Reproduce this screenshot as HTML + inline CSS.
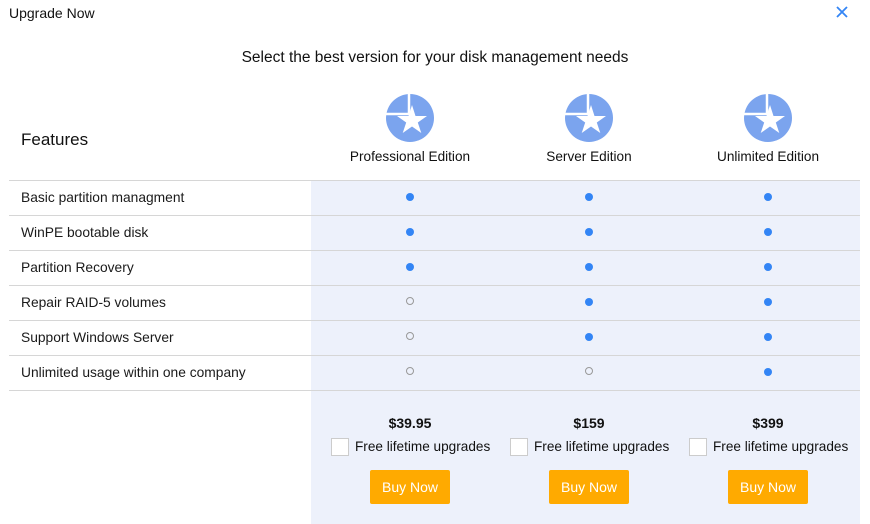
<!DOCTYPE html>
<html><head><meta charset="utf-8"><style>
body{margin:0;width:870px;height:524px;background:#fff;font-family:"Liberation Sans",sans-serif;color:#111;position:relative;overflow:hidden}
.a{position:absolute}
.bg{left:311px;top:180px;width:549px;height:344px;background:#edf1fb}
.hl{left:9px;width:851px;height:1px;background:#d6d6d6}
.lbl{left:21px;font-size:13.8px;color:#1a1a1a}
.dot{width:8px;height:8px;border-radius:50%;background:#3385f5}
.o{width:6px;height:6px;border-radius:50%;border:1px solid #999;background:transparent}
.ed{font-size:13.6px;text-align:center;width:160px}
.pr{font-size:14px;font-weight:bold;text-align:center;width:160px}
.cb{width:16px;height:16px;border:1px solid #ccc;background:#fff}
.fl{font-size:13.6px}
.bn{width:80px;height:34px;background:#ffaa00;color:#fff;font-size:14px;text-align:center;line-height:34px;border-radius:2px}
</style></head><body>
<div class="a bg"></div>
<div class="a" style="left:9px;top:5px;font-size:14px">Upgrade Now</div>
<svg class="a" style="left:836px;top:6px" width="12" height="12"><path d="M1,1 L11,11 M11,1 L1,11" stroke="#3385f5" stroke-width="1.8"/></svg>
<div class="a" style="left:0;width:870px;top:49px;text-align:center;font-size:15.5px">Select the best version for your disk management needs</div>
<div class="a" style="left:21px;top:130px;font-size:17px">Features</div>

<svg class="a" style="left:0;top:0" width="870" height="180">
<defs><g id="ic">
<circle cx="0" cy="0" r="24" fill="#7ba4ee"/>
<path d="M-1,-26 L-1,-4 L-26,-4" stroke="#fff" stroke-width="2.5" fill="none"/>
<polygon fill="#fff" points="2,-13 5.5,-2 17,-2 7.8,4.5 11.3,15 2,8.5 -7.3,15 -3.8,4.5 -13,-2 -1.5,-2"/>
</g></defs>
<use href="#ic" x="410" y="118"/>
<use href="#ic" x="589" y="118"/>
<use href="#ic" x="768" y="118"/>
</svg>
<div class="a ed" style="left:330px;top:149px">Professional Edition</div>
<div class="a ed" style="left:509px;top:149px">Server Edition</div>
<div class="a ed" style="left:688px;top:149px">Unlimited Edition</div>

<div class="a hl" style="top:180px"></div>
<div class="a hl" style="top:215px"></div>
<div class="a hl" style="top:250px"></div>
<div class="a hl" style="top:285px"></div>
<div class="a hl" style="top:320px"></div>
<div class="a hl" style="top:355px"></div>
<div class="a hl" style="top:390px"></div>

<div class="a lbl" style="top:190px">Basic partition managment</div>
<div class="a lbl" style="top:225px">WinPE bootable disk</div>
<div class="a lbl" style="top:260px">Partition Recovery</div>
<div class="a lbl" style="top:295px">Repair RAID-5 volumes</div>
<div class="a lbl" style="top:330px">Support Windows Server</div>
<div class="a lbl" style="top:365px">Unlimited usage within one company</div>

<div class="a dot" style="left:406px;top:193px"></div><div class="a dot" style="left:585px;top:193px"></div><div class="a dot" style="left:764px;top:193px"></div>
<div class="a dot" style="left:406px;top:228px"></div><div class="a dot" style="left:585px;top:228px"></div><div class="a dot" style="left:764px;top:228px"></div>
<div class="a dot" style="left:406px;top:263px"></div><div class="a dot" style="left:585px;top:263px"></div><div class="a dot" style="left:764px;top:263px"></div>
<div class="a o" style="left:406px;top:297px"></div><div class="a dot" style="left:585px;top:298px"></div><div class="a dot" style="left:764px;top:298px"></div>
<div class="a o" style="left:406px;top:332px"></div><div class="a dot" style="left:585px;top:333px"></div><div class="a dot" style="left:764px;top:333px"></div>
<div class="a o" style="left:406px;top:367px"></div><div class="a o" style="left:585px;top:367px"></div><div class="a dot" style="left:764px;top:368px"></div>

<div class="a pr" style="left:330px;top:415px">$39.95</div>
<div class="a pr" style="left:509px;top:415px">$159</div>
<div class="a pr" style="left:688px;top:415px">$399</div>

<div class="a cb" style="left:331px;top:438px"></div><div class="a fl" style="left:355px;top:439px">Free lifetime upgrades</div>
<div class="a cb" style="left:510px;top:438px"></div><div class="a fl" style="left:534px;top:439px">Free lifetime upgrades</div>
<div class="a cb" style="left:689px;top:438px"></div><div class="a fl" style="left:713px;top:439px">Free lifetime upgrades</div>

<div class="a bn" style="left:370px;top:470px">Buy Now</div>
<div class="a bn" style="left:549px;top:470px">Buy Now</div>
<div class="a bn" style="left:728px;top:470px">Buy Now</div>
</body></html>
